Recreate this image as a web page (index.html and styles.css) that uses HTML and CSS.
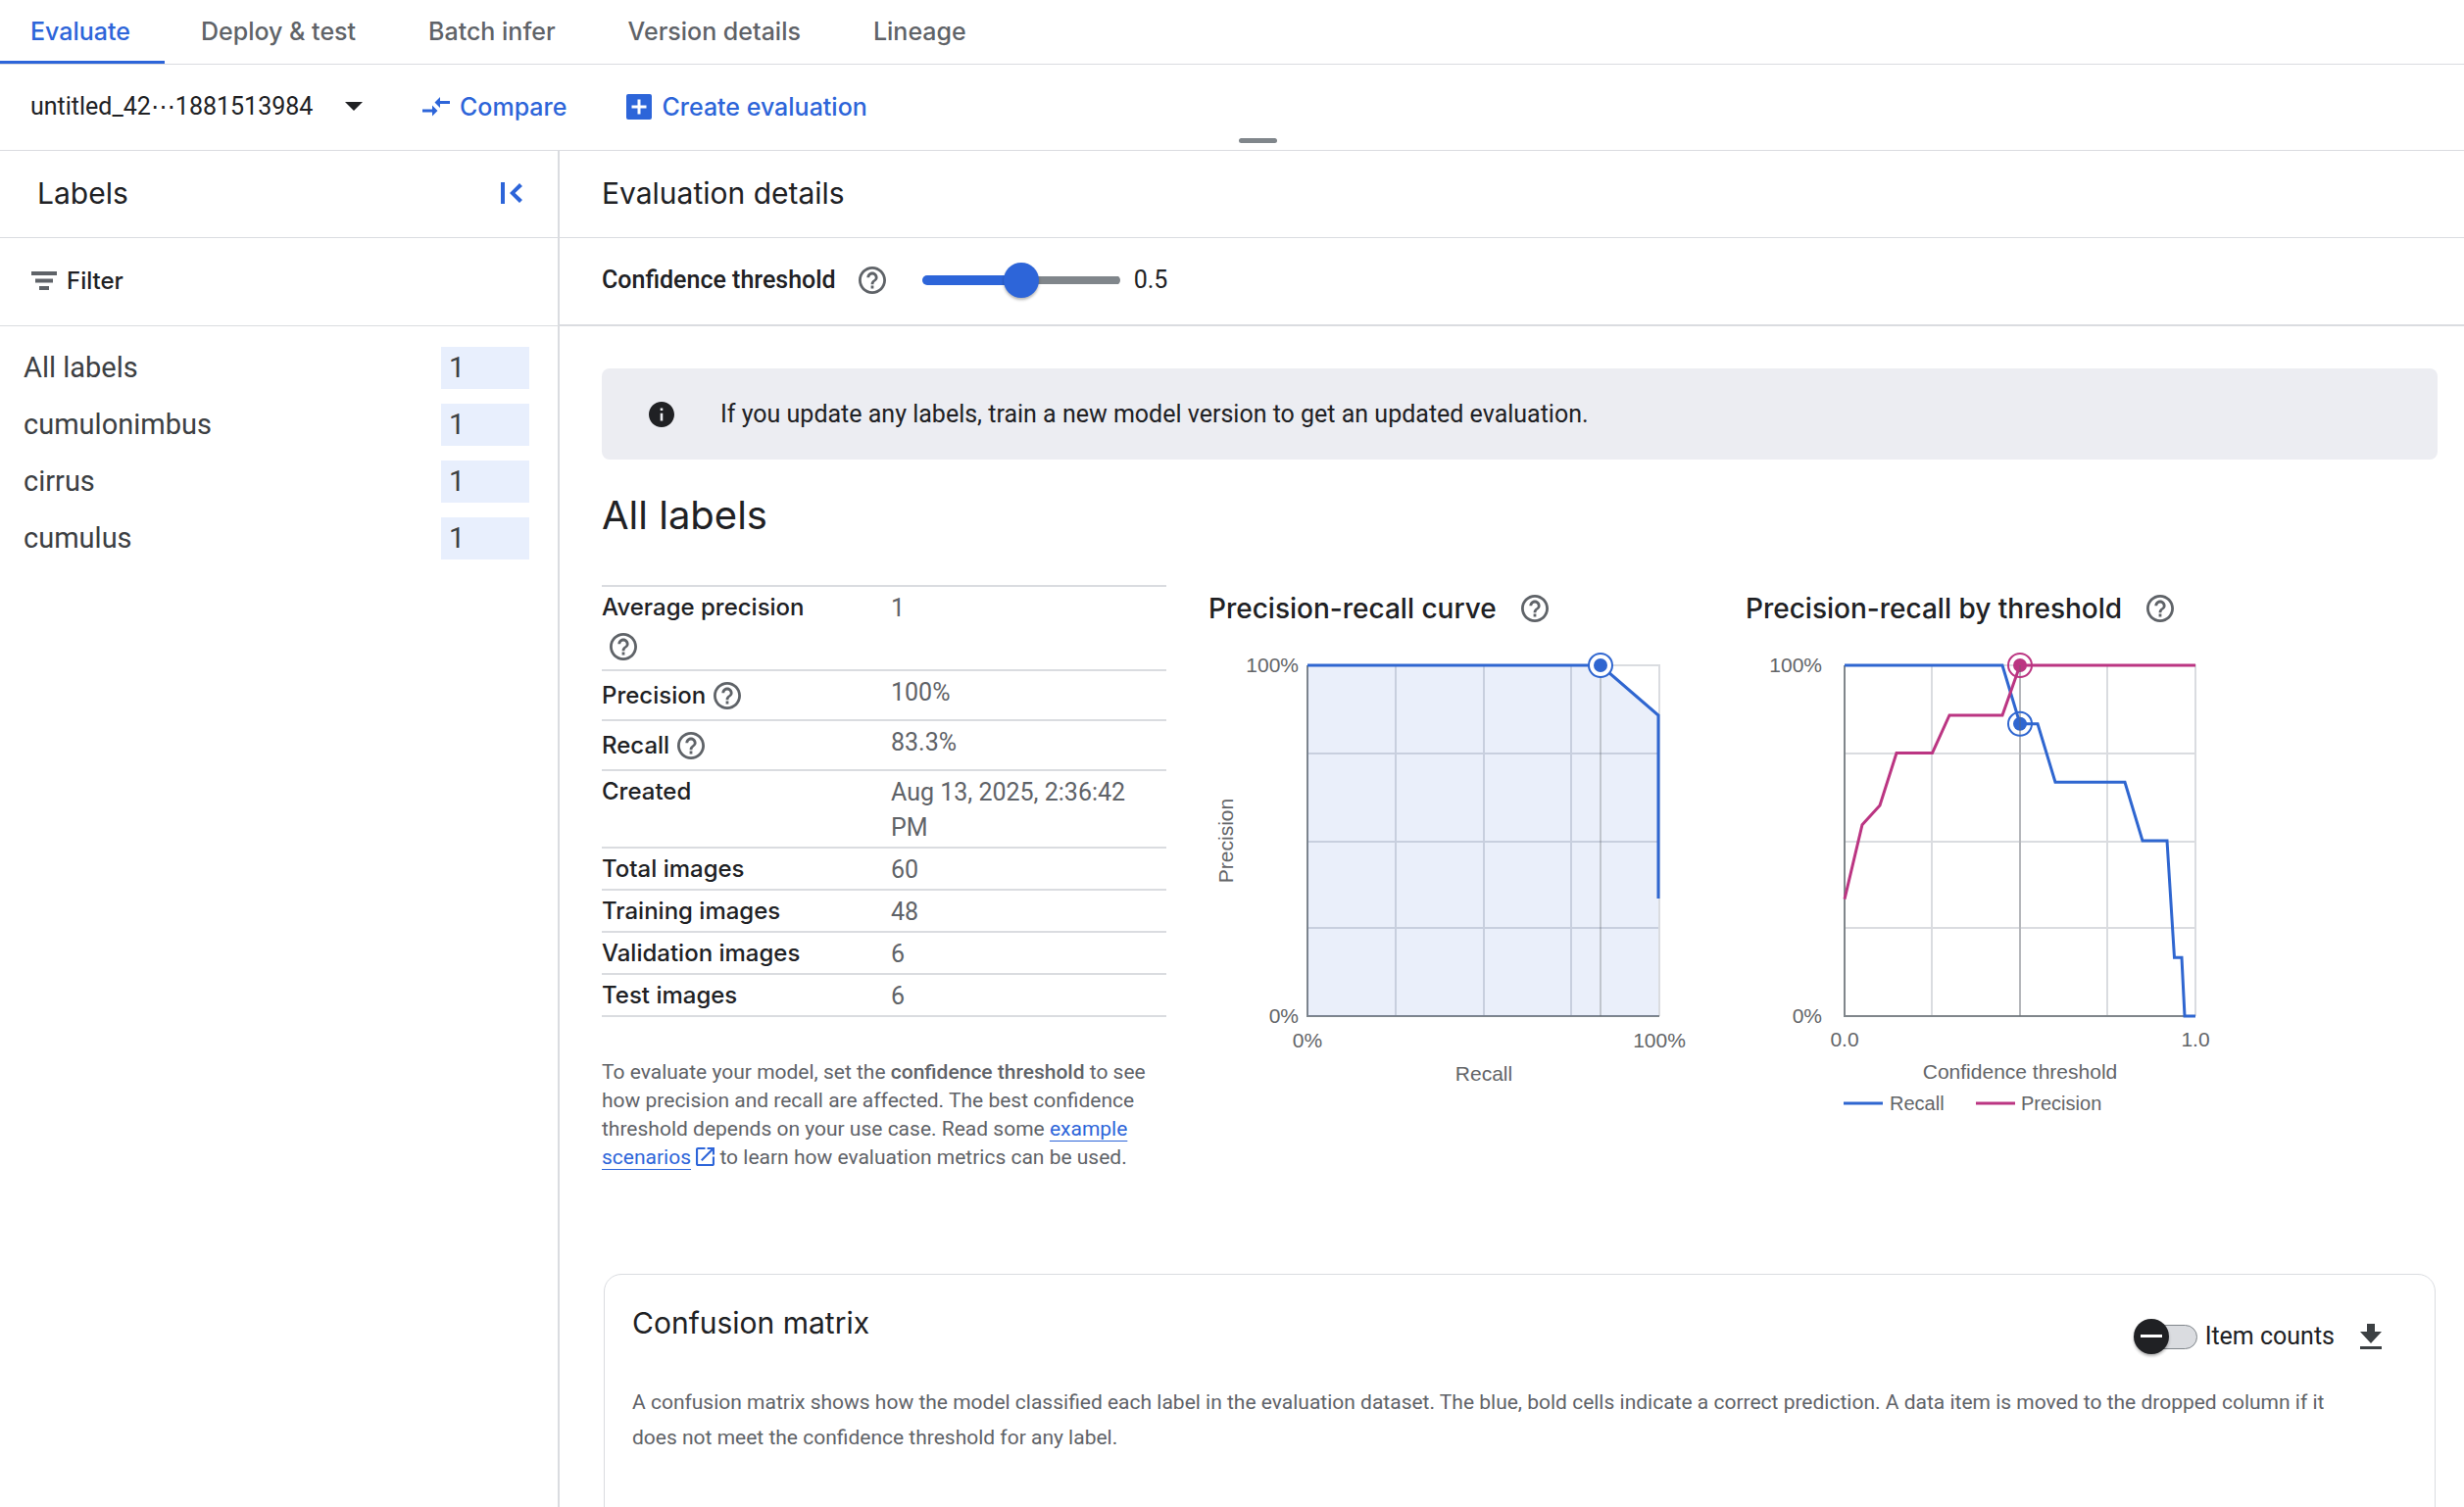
FILE: index.html
```html
<!DOCTYPE html>
<html lang="en">
<head>
<meta charset="utf-8">
<meta name="viewport" content="width=device-width, initial-scale=1">
<title>Evaluate</title>
<link rel="stylesheet" href="styles.css">
</head>
<body>
<svg class="sprite" aria-hidden="true">
  <symbol id="help" viewBox="2 2 20 20"><path d="M11 18h2v-2h-2v2zm1-16C6.480 2 2 6.480 2 12s4.480 10 10 10 10-4.480 10-10S17.520 2 12 2zm0 18c-4.410 0-8-3.590-8-8s3.590-8 8-8 8 3.590 8 8-3.590 8-8 8zm0-14c-2.210 0-4 1.790-4 4h2c0-1.100.9-2 2-2s2 .9 2 2c0 2-3 1.750-3 5h2c0-2.250 3-2.500 3-5 0-2.210-1.790-4-4-4z"/></symbol>
</svg>

<nav class="tabs">
  <a class="tab tab-active" href="#evaluate" aria-current="page">Evaluate</a>
  <a class="tab" href="#deploy">Deploy &amp; test</a>
  <a class="tab" href="#batch">Batch infer</a>
  <a class="tab" href="#version">Version details</a>
  <a class="tab" href="#lineage">Lineage</a>
</nav>

<div class="toolbar">
  <div class="picker">
    <select class="picker-select" aria-label="Evaluation"><option>untitled_42⋯1881513984</option></select>
    <svg class="picker-arrow" viewBox="0 0 18 9" aria-hidden="true"><path d="M0 0h18l-9 9z"/></svg>
  </div>
  <button class="action" type="button">
    <svg class="compare-icon" viewBox="0 0 28 20" aria-hidden="true"><path d="M18 0v4h10v3H18v4l-5.500-5.500zM10 8.500v4H0v3h10v4l5.500-5.500z"/></svg>
    Compare
  </button>
  <button class="action" type="button">
    <svg class="add-icon" viewBox="0 0 26 26" aria-hidden="true"><path fill-rule="evenodd" d="M2 0h22a2 2 0 0 1 2 2v22a2 2 0 0 1-2 2H2a2 2 0 0 1-2-2V2a2 2 0 0 1 2-2zm9.500 5.500v6h-6v3h6v6h3v-6h6v-3h-6v-6z"/></svg>
    Create evaluation
  </button>
  <span class="drag-handle"></span>
</div>

<div class="workspace">
  <aside class="sidebar">
    <header class="panel-head side-head">
      <h2 class="heading">Labels</h2>
      <button class="icon-button" type="button" aria-label="Collapse panel">
        <svg class="collapse-icon" viewBox="0 0 23 24" aria-hidden="true"><path d="M0 1h4v22H0zM19 2l3 3-7.500 7 7.500 7-3 3L9 12z"/></svg>
      </button>
    </header>
    <div class="panel-row">
      <button class="filter" type="button">
        <svg class="filter-icon" viewBox="0 0 26 19" aria-hidden="true"><path d="M0 0h26v4H0zM4 7.500h18v4H4zM8 15h10v4H8z"/></svg>
        Filter
      </button>
    </div>
    <ul class="labels">
      <li class="label-item"><span>All labels</span><span class="count">1</span></li>
      <li class="label-item"><span>cumulonimbus</span><span class="count">1</span></li>
      <li class="label-item"><span>cirrus</span><span class="count">1</span></li>
      <li class="label-item"><span>cumulus</span><span class="count">1</span></li>
    </ul>
  </aside>

  <main class="main">
    <header class="panel-head main-head"><h2 class="heading">Evaluation details</h2></header>
    <div class="threshold">
      <label class="threshold-label" for="threshold">Confidence threshold</label>
      <button class="icon-button" type="button" aria-label="About confidence threshold"><svg class="help-icon"><use href="#help"/></svg></button>
      <input class="slider" id="threshold" type="range" min="0" max="1" step="0.01" value="0.5">
      <output class="threshold-value" for="threshold">0.5</output>
    </div>

    <div class="content">
      <div class="banner">
        <svg class="info-icon" viewBox="2 2 20 20" aria-hidden="true"><path d="M12 2C6.480 2 2 6.480 2 12s4.480 10 10 10 10-4.480 10-10S17.520 2 12 2zm1 15h-2v-6h2v6zm0-8h-2V7h2v2z"/></svg>
        <span>If you update any labels, train a new model version to get an updated evaluation.</span>
      </div>

      <h1 class="title">All labels</h1>

      <div class="overview">
        <section class="summary">
          <table class="metrics">
            <tr><th scope="row"><span class="metric metric-wrap"><span class="metric-line">Average precision</span><button class="icon-button metric-help" type="button" aria-label="About average precision"><svg class="help-icon"><use href="#help"/></svg></button></span></th><td>1</td></tr>
            <tr><th scope="row"><span class="metric">Precision<button class="icon-button metric-help" type="button" aria-label="About precision"><svg class="help-icon"><use href="#help"/></svg></button></span></th><td>100%</td></tr>
            <tr><th scope="row"><span class="metric">Recall<button class="icon-button metric-help" type="button" aria-label="About recall"><svg class="help-icon"><use href="#help"/></svg></button></span></th><td>83.3%</td></tr>
            <tr><th scope="row">Created</th><td>Aug 13, 2025, 2:36:42 PM</td></tr>
            <tr><th scope="row">Total images</th><td>60</td></tr>
            <tr><th scope="row">Training images</th><td>48</td></tr>
            <tr><th scope="row">Validation images</th><td>6</td></tr>
            <tr><th scope="row">Test images</th><td>6</td></tr>
          </table>
          <p class="note">To evaluate your model, set the <strong>confidence threshold</strong> to see how precision and recall are affected. The best confidence threshold depends on your use case. Read some <a class="link" href="#scenarios">example scenarios</a> <svg class="external-icon" viewBox="3 3 18 18" aria-hidden="true"><path d="M19 19H5V5h7V3H5c-1.110 0-2 .9-2 2v14c0 1.100.89 2 2 2h14c1.100 0 2-.9 2-2v-7h-2v7zM14 3v2h3.590l-9.830 9.830 1.410 1.410L19 6.410V10h2V3h-7z"/></svg> to learn how evaluation metrics can be used.</p>
        </section>

        <section class="chart">
          <h3 class="chart-title">Precision-recall curve <button class="icon-button" type="button" aria-label="About the precision-recall curve"><svg class="help-icon"><use href="#help"/></svg></button></h3>
          <svg class="plot" viewBox="0 0 548 500" role="img" aria-label="Precision against recall">
            <g class="grid"><path d="M102 33H460V391M191 33V391M281 33V391M370 33V391M102 123H460M102 213H460M102 301H460"/></g>
            <path class="axis" d="M101 33V391H460"/>
            <path class="area" d="M101 33H400L459 84V391H101z"/>
            <path class="marker-line" d="M400 33V391"/>
            <path class="series recall" d="M101 33H400L459 84V271"/>
            <circle class="ring recall ring-filled" cx="400" cy="33" r="12"/><circle class="dot-recall" cx="400" cy="33" r="7"/>
            <g class="axis-text">
              <text x="92" y="40" text-anchor="end">100%</text><text x="92" y="398" text-anchor="end">0%</text>
              <text x="101" y="423" text-anchor="middle">0%</text><text x="460" y="423" text-anchor="middle">100%</text>
              <text x="281" y="457" text-anchor="middle">Recall</text>
              <text x="-212" y="25" text-anchor="middle" transform="rotate(-90)">Precision</text>
            </g>
          </svg>
        </section>

        <section class="chart">
          <h3 class="chart-title">Precision-recall by threshold <button class="icon-button" type="button" aria-label="About precision-recall by threshold"><svg class="help-icon"><use href="#help"/></svg></button></h3>
          <svg class="plot" viewBox="0 0 548 500" role="img" aria-label="Precision and recall against confidence threshold">
            <g class="grid"><path d="M101 33H459V391M190 33V391M280 33V391M369 33V391M101 123H459M101 213H459M101 301H459"/></g>
            <path class="axis" d="M101 33V391H459"/>
            <path class="series recall" d="M101 33H262L280 92.700H298L316 152.300H387L405 212H430L437.500 331.300H445L448 391H459"/>
            <path class="series precision" d="M101 271.700L119 195.700L137 176L154 122.500H190.500L208 84H262L280 33H459"/>
            <circle class="dot-recall" cx="280" cy="92.700" r="7"/><circle class="dot-precision" cx="280" cy="33" r="7"/>
            <path class="marker-line" d="M280 33V391"/>
            <circle class="ring recall" cx="280" cy="92.700" r="12"/><circle class="ring precision" cx="280" cy="33" r="12"/>
            <g class="axis-text">
              <text x="78" y="40" text-anchor="end">100%</text><text x="78" y="398" text-anchor="end">0%</text>
              <text x="101" y="422" text-anchor="middle">0.0</text><text x="459" y="422" text-anchor="middle">1.0</text>
              <text x="280" y="455" text-anchor="middle">Confidence threshold</text>
            </g>
            <path class="series recall" d="M100 480H140"/><path class="series precision" d="M235 480H275"/>
            <g class="legend-text"><text x="147" y="487">Recall</text><text x="281" y="487">Precision</text></g>
          </svg>
        </section>
      </div>

      <section class="card">
        <header class="card-head">
          <h2 class="heading">Confusion matrix</h2>
          <div class="card-tools">
            <label class="toggle"><input class="switch" type="checkbox" role="switch">Item counts</label>
            <button class="icon-button" type="button" aria-label="Download"><svg class="download-icon" viewBox="0 0 22 26" aria-hidden="true"><path d="M7 0h8v8h7L11 20 0 8h7zM0 23h22v3H0z"/></svg></button>
          </div>
        </header>
        <p class="card-text">A confusion matrix shows how the model classified each label in the evaluation dataset. The blue, bold cells indicate a correct prediction. A data item is moved to the dropped column if it does not meet the confidence threshold for any label.</p>
      </section>
    </div>
  </main>
</div>
</body>
</html>
```
FILE: styles.css
```css
:root {
  --blue: #2d65d9;
  --ink: #202124;
  --muted: #5f6368;
  --line: #dadce0;
  --brand-font: Inter, "Open Sans", sans-serif;
}

* { box-sizing: border-box; }

body {
  margin: 0;
  height: 100vh;
  display: flex;
  flex-direction: column;
  overflow: hidden;
  background: #fff;
  color: var(--ink);
  font: 25px/36px Roboto, sans-serif;
}

h1, h2, h3, p, ul { margin: 0; padding: 0; font-weight: 400; }
ul { list-style: none; }
button { padding: 0; border: 0; background: none; font: inherit; color: inherit; cursor: pointer; }
svg { display: block; flex: none; fill: currentColor; }
.sprite { position: absolute; width: 0; height: 0; }
.icon-button { display: flex; flex: none; }
.help-icon { width: 28px; height: 28px; color: var(--muted); }
.heading { font: 400 30px/40px var(--brand-font); }

/* Tabs */
.tabs { display: flex; flex: none; height: 66px; border-bottom: 1px solid var(--line); }
.tab {
  padding: 2px 37px 0;
  border-bottom: 3px solid transparent;
  color: var(--muted);
  font: 500 25px/60px var(--brand-font);
  text-decoration: none;
}
.tab-active { padding-right: 35px; padding-left: 31px; border-color: var(--blue); color: var(--blue); }

/* Toolbar */
.toolbar {
  position: relative;
  display: flex;
  flex: none;
  align-items: center;
  gap: 61px;
  height: 88px;
  padding: 0 31px 2px;
  border-bottom: 1px solid var(--line);
}
.picker { display: grid; align-items: center; width: 339px; }
.picker-select {
  grid-area: 1 / 1;
  width: 100%;
  padding: 0;
  border: 0;
  background: none;
  appearance: none;
  color: var(--ink);
  font: 25px/36px Roboto, sans-serif;
}
.picker-arrow { grid-area: 1 / 1; justify-self: end; width: 18px; height: 9px; pointer-events: none; }
.action { display: flex; align-items: center; gap: 10px; color: var(--blue); font: 500 25px/36px var(--brand-font); }
.compare-icon { width: 28px; height: 20px; }
.add-icon { width: 26px; height: 26px; }
.drag-handle { position: absolute; bottom: 7px; left: calc(50% + 7px); width: 39px; height: 5px; border-radius: 3px; background: #80868b; }

/* Columns */
.workspace { display: flex; flex: 1; min-height: 0; }
.sidebar { flex: none; width: 571px; border-right: 2px solid var(--line); }
.panel-head { display: flex; align-items: center; height: 89px; border-bottom: 1px solid var(--line); }
.side-head { justify-content: space-between; padding: 0 35px 2px 38px; }
.main-head { flex: none; padding: 0 43px 2px; }
.collapse-icon { width: 23px; height: 24px; color: var(--blue); }
.panel-row { display: flex; align-items: center; height: 90px; padding: 0 32px 2px; border-bottom: 1px solid var(--line); }
.filter { display: flex; align-items: center; gap: 10px; font: 500 24px/36px var(--brand-font); }
.filter-icon { width: 26px; height: 19px; color: var(--muted); }
.labels { display: flex; flex-direction: column; gap: 15px; padding: 21px 29px 21px 24px; }
.label-item { display: flex; justify-content: space-between; color: #3c4043; font-size: 29px; line-height: 43px; }
.count { width: 90px; padding-left: 8px; background: #e8effd; }

.main { display: flex; flex: 1; flex-direction: column; min-width: 0; }
.threshold { display: flex; flex: none; align-items: center; height: 90px; padding: 0 43px 2px; border-bottom: 2px solid var(--line); }
.threshold-label { margin-right: 23px; font-weight: 500; }
.slider {
  width: 202px;
  height: 36px;
  margin: 0 14px 0 37px;
  appearance: none;
  background: none;
}
.slider::-webkit-slider-runnable-track {
  height: 10px;
  border-radius: 5px;
  background:
    linear-gradient(var(--blue), var(--blue)) left center / 50% 10px no-repeat,
    linear-gradient(#80868b, #80868b) right center / 50% 8px no-repeat;
}
.slider::-webkit-slider-thumb {
  appearance: none;
  width: 36px;
  height: 36px;
  margin-top: -13px;
  border-radius: 50%;
  background: var(--blue);
  box-shadow: 0 2px 3px rgba(0, 0, 0, .3);
}

.content { flex: 1; min-height: 0; overflow-y: auto; padding: 43px 27px 0 43px; scrollbar-width: none; }
.banner { display: flex; align-items: center; gap: 47px; min-height: 93px; padding: 0 48px; border-radius: 8px; background: #ecedf2; }
.info-icon { width: 26px; height: 26px; }
.title { margin: 28px 0 42px; font: 400 40px/58px var(--brand-font); }

/* Metrics and charts */
.overview { display: flex; min-height: 703px; }
.summary { flex: none; width: 576px; margin-right: 43px; }
.metrics { width: 100%; border-spacing: 0; border-bottom: 2px solid var(--line); }
.metrics th, .metrics td { border-top: 2px solid var(--line); text-align: left; vertical-align: top; }
.metrics th { width: 295px; padding: 3px 0 2px; font: 500 24px/36px var(--brand-font); }
.metrics td { padding: 4px 0 1px; color: var(--muted); }
.metric { display: flex; align-items: center; min-height: 44px; }
.metric-wrap { flex-wrap: wrap; align-content: flex-start; row-gap: 8px; min-height: 79px; }
.metric-line { width: 100%; }
.metric-help { margin-left: 8px; }
.note { margin-top: 42px; color: var(--muted); font-size: 21px; line-height: 29px; }
.note strong { font-weight: 500; }
.link { color: var(--blue); text-underline-offset: 5px; text-decoration-thickness: 1px; }
.external-icon { display: inline; width: 19px; height: 19px; color: var(--blue); vertical-align: -2px; }

.chart { flex: none; width: 548px; }
.chart-title { display: flex; align-items: center; gap: 25px; height: 48px; font: 500 28px/36px var(--brand-font); }
.plot { width: 100%; margin-top: 1px; }
.grid { fill: none; stroke: var(--line); stroke-width: 2px; }
.axis { fill: none; stroke: #80868b; stroke-width: 2px; }
.area { fill: rgba(51, 102, 204, .1); }
.marker-line { fill: none; stroke: rgba(95, 99, 104, .3); stroke-width: 2px; }
.series { fill: none; stroke-width: 3px; }
.recall { stroke: #2f66d0; }
.precision { stroke: #bb3582; }
.ring { fill: none; stroke-width: 2px; }
.ring-filled { fill: #fff; }
.dot-recall { fill: #2f66d0; }
.dot-precision { fill: #bb3582; }
.axis-text, .legend-text { fill: #636568; font: 21px "Liberation Sans", sans-serif; }
.legend-text { font-size: 20px; }

/* Confusion matrix */
.card { min-height: 480px; margin: 0 2px; padding: 29px 28px; border: 1px solid var(--line); border-radius: 18px; }
.card-head { display: flex; justify-content: space-between; }
.card-tools { display: flex; align-items: center; gap: 26px; padding: 16px 26px 0 0; }
.toggle { display: flex; align-items: center; gap: 8px; }
.switch { position: relative; width: 56px; height: 25px; margin: 0 0 0 9px; appearance: none; border: 1px solid #80868b; border-radius: 13px; background: var(--line); }
.switch::before {
  content: "";
  position: absolute;
  top: -7px;
  left: -10px;
  width: 36px;
  height: 36px;
  border-radius: 50%;
  background: linear-gradient(#fff, #fff) center / 22px 3px no-repeat var(--ink);
  box-shadow: 0 2px 3px rgba(0, 0, 0, .3);
}
.download-icon { width: 22px; height: 26px; color: #3c4043; }
.card-text { margin-top: 31px; padding-right: 50px; color: var(--muted); font-size: 21px; }
```
